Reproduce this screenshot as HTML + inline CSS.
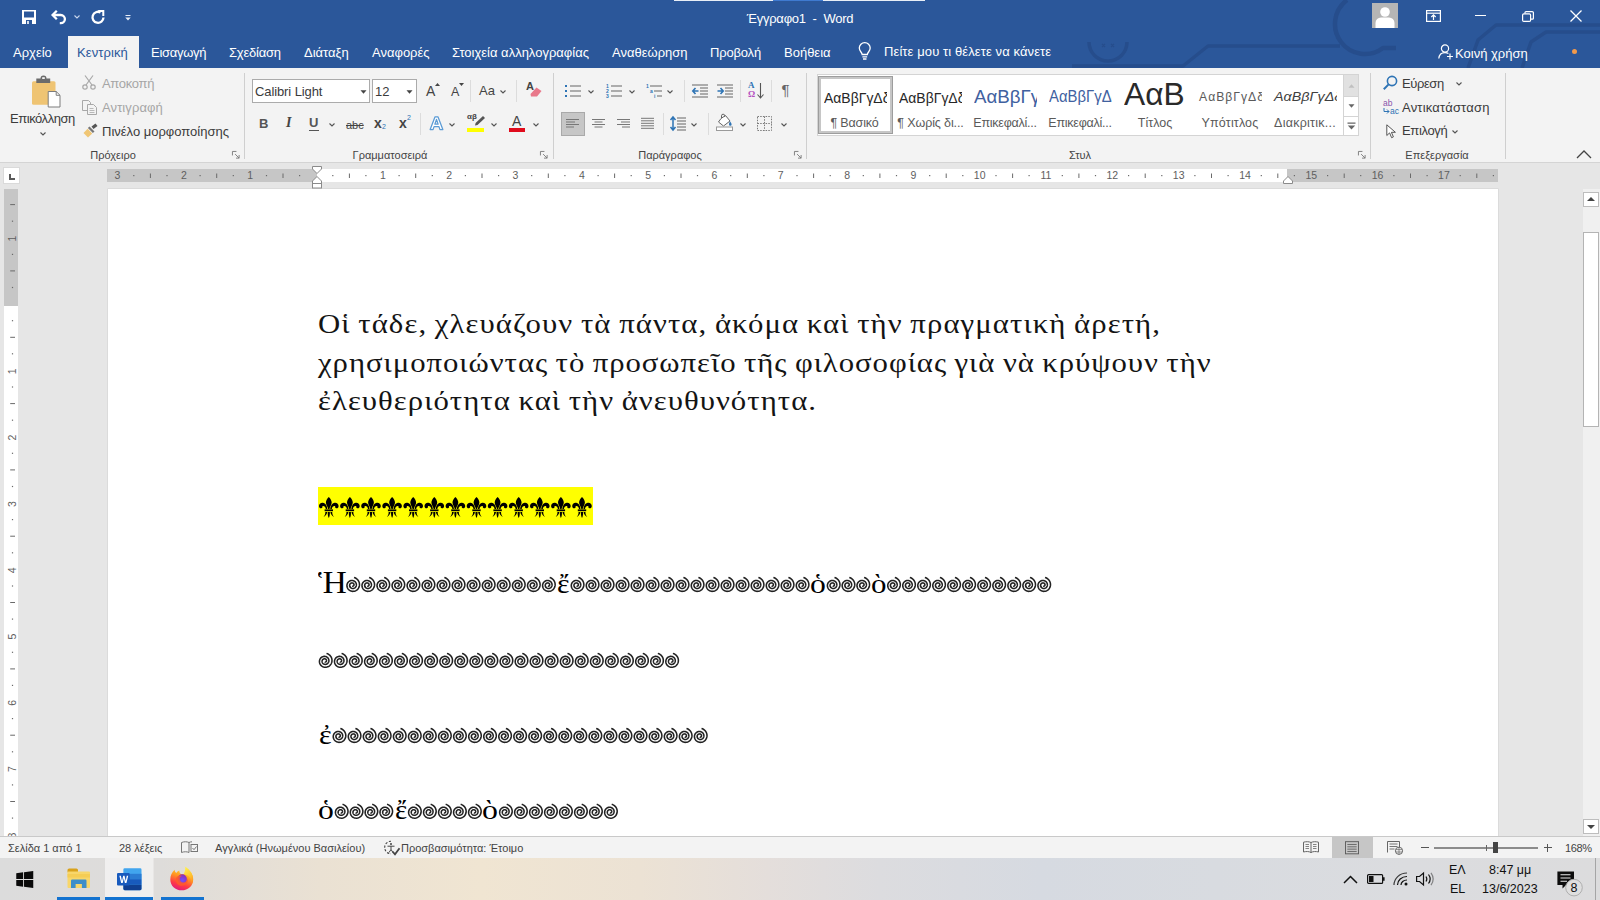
<!DOCTYPE html>
<html lang="el"><head><meta charset="utf-8"><title>Έγγραφο1 - Word</title>
<style>
*{box-sizing:border-box;margin:0;padding:0}
html,body{width:1600px;height:900px;overflow:hidden;background:#e6e6e6;font-family:"Liberation Sans",sans-serif;}
.a{position:absolute;white-space:pre;}
svg{position:absolute;overflow:visible}
#title{position:absolute;left:0;top:0;width:1600px;height:68px;background:#2b579a;overflow:hidden}
.tab{position:absolute;top:45px;font-size:13px;color:#fff;white-space:pre;line-height:16px}
#ribbon{position:absolute;left:0;top:68px;width:1600px;height:95px;background:#f3f3f3;border-bottom:1px solid #d4d4d4}
.gl{position:absolute;top:81px;font-size:11px;color:#444;white-space:pre;line-height:13px;transform:translateX(-50%)}
.sep{position:absolute;top:5px;width:1px;height:86px;background:#cfcfcf}
.rt{position:absolute;font-size:13px;color:#3b3b3b;white-space:pre;line-height:16px}
.dim{color:#a6a6a6}
.sp{position:absolute;top:1px;width:64px;height:38px;overflow:hidden}
.sp span{position:absolute;white-space:pre;line-height:24px;transform-origin:0 50%}
.sl{position:absolute;top:40.5px;font-size:12.5px;color:#5a5a5a;white-space:pre;line-height:15px;transform:translateX(-50%)}
#doc{position:absolute;left:0;top:164px;width:1600px;height:672px;background:#e6e6e6;overflow:hidden}
#page{position:absolute;left:108px;top:25px;width:1390px;height:660px;background:#fff;box-shadow:0 0 0 0.5px #d0d0d0}
#status{position:absolute;left:0;top:836px;width:1600px;height:22px;background:#f3f3f3;border-top:1px solid #c9c9c9;font-size:11px;color:#444}
#task{position:absolute;left:0;top:858px;width:1600px;height:42px;background:linear-gradient(90deg,#dcdcdc 0,#dedcda 10%,#eae1d3 20%,#f0e5d2 30%,#ece2d4 40%,#e4dedb 48%,#dcdcdf 55%,#d6dae1 65%,#d8dbe0 76%,#dbdcdf 88%,#dcdcdd 100%)}
.st{top:5px;line-height:13px;font-size:11px;color:#444}
.tk{font-size:12.5px;color:#111;line-height:15px}
.body{font-family:"Liberation Serif",serif;color:#000;white-space:pre;position:absolute;transform-origin:0 0}
</style></head><body>
<div id="title">
<!-- background circuit decoration -->
<svg width="1600" height="68" style="left:0;top:0" fill="none" stroke="#264d8c" stroke-width="3.5" stroke-linejoin="round">
<path d="M1089 42 A19 19 0 0 0 1127 42"/>
<path d="M1102 44l3 3m0-3l-3 3M1111 44l3 3m0-3l-3 3" stroke-width="1.200"/>
<path d="M1072 66 H1183 L1208 46 H1340"/>
<path d="M1347 0 A30 30 0 0 0 1383 48 H1396" stroke-width="4.5"/>
<path d="M1468 68 L1478 40 L1496 25 H1600"/>
<path d="M1522 68 L1531 42 L1546 32 H1600"/>

</svg>
<!-- top strip -->
<div class="a" style="left:674px;top:0;width:99px;height:1px;background:#e8eef7"></div>
<div class="a" style="left:773px;top:0;width:50px;height:1px;background:#3f7ad0"></div>
<div class="a" style="left:823px;top:0;width:102px;height:1px;background:#e8eef7"></div>
<!-- QAT -->
<svg width="14" height="14" style="left:22px;top:10px" viewBox="0 0 14 14"><path fill="#fff" d="M0 0h14v14H0z"/><path fill="#2b579a" d="M2 1.5h10v6H2z"/><path fill="#2b579a" d="M4 10h6v4H4z"/><path fill="#fff" d="M5.2 11h1.6v3H5.2z"/></svg>
<svg width="16" height="14" style="left:51px;top:10px" viewBox="0 0 16 14" fill="none" stroke="#fff" stroke-width="2.3"><path d="M5.800 0.800 L1.600 5 L5.800 9.200"/><path d="M2.200 5 H9.800 a4.100 4.100 0 0 1 0 8.200 H8.800"/></svg>
<svg width="6" height="4" style="left:74px;top:15px" viewBox="0 0 6 4" fill="none" stroke="#c9d6ec" stroke-width="1.1"><path d="M0.5 0.5 L3 3 L5.5 0.5"/></svg>
<svg width="14" height="14" style="left:91px;top:9.5px" viewBox="0 0 14 14" fill="none" stroke="#fff" stroke-width="2.300"><path d="M9.500 2.400 A5.500 5.500 0 1 0 12.500 7.500"/><path d="M7.200 1.100 H12.300 V6" stroke-width="2"/></svg>
<svg width="6" height="6" style="left:125px;top:15px" viewBox="0 0 6 6"><path fill="#e6ecf6" d="M0.5 0h5v1.1h-5z M0.3 2.6h5.4L3 5.4z"/></svg>
<div class="a" style="left:0;width:1600px;top:11px;text-align:center;font-size:13px;color:#fff;line-height:16px;padding-left:0px;letter-spacing:-0.24px">Έγγραφο1  -  Word</div>
<!-- avatar -->
<div class="a" style="left:1372px;top:3px;width:26px;height:25px;background:#b5b5b5"></div>
<svg width="26" height="25" style="left:1372px;top:3px" viewBox="0 0 26 25"><circle cx="13" cy="9" r="4.8" fill="#fff"/><path fill="#fff" d="M3.5 25 V20 a5.5 5.5 0 0 1 5.5-5.5 h8 a5.5 5.5 0 0 1 5.5 5.5 V25z"/></svg>
<!-- ribbon display -->
<svg width="15" height="12" style="left:1426px;top:10px" viewBox="0 0 15 12" fill="none" stroke="#fff" stroke-width="1.2"><rect x="0.6" y="0.6" width="13.8" height="10.8"/><path d="M0.6 3.2H14.4"/><path d="M7.5 10V5 M5.3 7L7.5 4.8L9.7 7"/></svg>
<div class="a" style="left:1475px;top:15px;width:11px;height:1.3px;background:#fff"></div>
<svg width="12" height="11" style="left:1522px;top:10.5px" viewBox="0 0 12 11" fill="none" stroke="#fff" stroke-width="1.2"><rect x="0.6" y="2.8" width="8" height="7.6" rx="1.2"/><path d="M3 2.6 V1.6 a1 1 0 0 1 1-1 H10.2 a1.2 1.2 0 0 1 1.2 1.2 V7.2 a1 1 0 0 1 -1 1 H9"/></svg>
<svg width="12" height="12" style="left:1570px;top:10px" viewBox="0 0 12 12" fill="none" stroke="#fff" stroke-width="1.3"><path d="M0.5 0.5 L11.5 11.5 M11.5 0.5 L0.5 11.5"/></svg>
<!-- tabs -->
<div class="a" style="left:68px;top:36px;width:71px;height:32px;background:#f3f3f3"></div>
<span class="tab" style="left:13px">Αρχείο</span>
<span class="tab" style="left:77px;color:#2b579a;letter-spacing:0.1px">Κεντρική</span>
<span class="tab" style="left:151px;letter-spacing:-0.28px">Εισαγωγή</span>
<span class="tab" style="left:229px;letter-spacing:-0.22px">Σχεδίαση</span>
<span class="tab" style="left:304px">Διάταξη</span>
<span class="tab" style="left:372px">Αναφορές</span>
<span class="tab" style="left:452px">Στοιχεία αλληλογραφίας</span>
<span class="tab" style="left:612px">Αναθεώρηση</span>
<span class="tab" style="left:710px;letter-spacing:-0.17px">Προβολή</span>
<span class="tab" style="left:784px">Βοήθεια</span>
<svg width="13.5" height="18.5" style="left:858px;top:42px" viewBox="0 0 12 17" fill="none" stroke="#fff" stroke-width="1.2"><path d="M3.6 11.5 C3.6 9.5 1 8.6 1 5.6 A5 5 0 0 1 11 5.6 C11 8.6 8.4 9.5 8.4 11.5 Z"/><path d="M3.8 13.6 H8.2 M4.4 15.6 H7.6"/></svg>
<span class="tab" style="left:884px;top:44px;letter-spacing:0.1px">Πείτε μου τι θέλετε να κάνετε</span>
<svg width="16" height="16" style="left:1438px;top:44px" viewBox="0 0 16 16" fill="none" stroke="#fff" stroke-width="1.2"><circle cx="7" cy="4.5" r="3.6"/><path d="M0.8 14.5 C1.2 10.5 4 8.6 7 8.6 C8.6 8.6 9.6 9 10.4 9.6"/><path d="M12 9.5 V15.5 M9 12.5 H15"/></svg>
<span class="tab" style="left:1455px;top:46px">Κοινή χρήση</span>
<div class="a" style="left:1572px;top:49px;width:5px;height:5px;border-radius:3px;background:#f2994a"></div>
</div>
<div id="ribbon">
<!-- separators -->
<div class="sep" style="left:244px"></div><div class="sep" style="left:553px"></div><div class="sep" style="left:806px"></div><div class="sep" style="left:1370px"></div><div class="sep" style="left:1505px"></div>
<!-- group labels (coords relative to ribbon: y = abs-68) -->
<span class="gl" style="left:113px">Πρόχειρο</span>
<span class="gl" style="left:390px">Γραμματοσειρά</span>
<span class="gl" style="left:670px">Παράγραφος</span>
<span class="gl" style="left:1080px">Στυλ</span>
<span class="gl" style="left:1437px">Επεξεργασία</span>
<!-- launchers -->
<svg class="ln" width="8" height="8" style="left:232px;top:83px" viewBox="0 0 9 9" fill="none" stroke="#777" stroke-width="1"><path d="M0.5 5V0.5H5"/><path d="M3.5 3.5L8 8M8 4.5V8H4.5"/></svg>
<svg class="ln" width="8" height="8" style="left:540px;top:83px" viewBox="0 0 9 9" fill="none" stroke="#777" stroke-width="1"><path d="M0.5 5V0.5H5"/><path d="M3.5 3.5L8 8M8 4.5V8H4.5"/></svg>
<svg class="ln" width="8" height="8" style="left:794px;top:83px" viewBox="0 0 9 9" fill="none" stroke="#777" stroke-width="1"><path d="M0.5 5V0.5H5"/><path d="M3.5 3.5L8 8M8 4.5V8H4.5"/></svg>
<svg class="ln" width="8" height="8" style="left:1358px;top:83px" viewBox="0 0 9 9" fill="none" stroke="#777" stroke-width="1"><path d="M0.5 5V0.5H5"/><path d="M3.5 3.5L8 8M8 4.5V8H4.5"/></svg>
<svg width="16" height="9" style="left:1576px;top:82px" viewBox="0 0 16 9" fill="none" stroke="#444" stroke-width="1.3"><path d="M1 8L8 1L15 8"/></svg>

<!-- ===== Clipboard ===== -->
<svg width="31" height="34" style="left:31px;top:7px" viewBox="0 0 31 34">
<rect x="1" y="6.3" width="23.5" height="23.4" rx="1.5" fill="#efc473"/>
<path d="M5.3 3.6h4.2a3 3 0 0 1 6 0h3.7v4.4H5.3z" fill="#6b6b6b"/>
<rect x="11.2" y="2.2" width="2.6" height="1.8" fill="#f3f3f3"/>
<path d="M17.200 16.500h8l3.800 3.800V32h-11.800z" fill="#fff" stroke="#7d7d7d" stroke-width="1"/>
<path d="M25.200 16.500v3.800h3.800" fill="none" stroke="#7d7d7d" stroke-width="1"/>
</svg>
<span class="rt" style="left:10px;top:43px;letter-spacing:-0.45px">Επικόλληση</span>
<svg width="6" height="4" style="left:40px;top:64px" viewBox="0 0 6 4" fill="none" stroke="#555" stroke-width="1.1"><path d="M0.5 0.5L3 3L5.5 0.5"/></svg>
<!-- cut -->
<svg width="14" height="15" style="left:82px;top:7px" viewBox="0 0 14 15" fill="none" stroke="#a8a8a8" stroke-width="1.2"><path d="M3 0.5L10 10M11 0.5L4 10"/><circle cx="3" cy="12" r="2.2"/><circle cx="11" cy="12" r="2.2"/></svg>
<span class="rt dim" style="left:102px;top:8px;letter-spacing:-0.3px">Αποκοπή</span>
<!-- copy -->
<svg width="15" height="15" style="left:82px;top:32px" viewBox="0 0 15 15" fill="#f3f3f3" stroke="#a8a8a8" stroke-width="1"><path d="M0.5 0.5h6l2 2v8h-8z"/><path d="M5.5 4.5h6l3 3v7h-9z"/><path d="M7.5 8.5h4M7.5 10.5h5M7.5 12.5h5" stroke-width="0.8"/></svg>
<span class="rt dim" style="left:102px;top:32px;letter-spacing:0.1px">Αντιγραφή</span>
<!-- format painter -->
<svg width="15" height="15" style="left:83px;top:55px" viewBox="0 0 15 15"><path d="M8.5 3.5L12.5 0.5L14.5 3L10.5 6z" fill="#555"/><path d="M6.5 3.5l5 5-1.6 1.4-5-5z" fill="#777"/><path d="M4.6 5.8l4.6 4.6L5 14.5 0.5 10z" fill="#f0c674"/></svg>
<span class="rt" style="left:102px;top:56px">Πινέλο μορφοποίησης</span>

<!-- ===== Font ===== -->
<div class="a" style="left:252px;top:11px;width:118px;height:24px;background:#fff;border:1px solid #ababab"></div>
<span class="rt" style="left:255px;top:15.5px;letter-spacing:-0.1px">Calibri Light</span>
<svg width="7" height="4" style="left:360px;top:22px" viewBox="0 0 7 4"><path d="M0.5 0.3h6L3.5 3.7z" fill="#444"/></svg>
<div class="a" style="left:372px;top:11px;width:45px;height:24px;background:#fff;border:1px solid #ababab"></div>
<span class="rt" style="left:375px;top:15.5px">12</span>
<svg width="7" height="4" style="left:406px;top:22px" viewBox="0 0 7 4"><path d="M0.5 0.3h6L3.5 3.7z" fill="#444"/></svg>
<span class="rt" style="left:426px;top:15px;font-size:14px;color:#444">A</span>
<svg width="5" height="3" style="left:435px;top:15px" viewBox="0 0 5 3"><path d="M0 3L2.5 0L5 3z" fill="#444"/></svg>
<span class="rt" style="left:451px;top:16px;font-size:12.5px;color:#444">A</span>
<svg width="5" height="3" style="left:459px;top:15px" viewBox="0 0 5 3"><path d="M0 0L2.5 3L5 0z" fill="#444"/></svg>
<div class="a" style="left:470px;top:12px;width:1px;height:22px;background:#dcdcdc"></div>
<span class="rt" style="left:479px;top:15px;font-size:13px;color:#444">Aa</span>
<svg width="6" height="4" style="left:500px;top:22px" viewBox="0 0 6 4" fill="none" stroke="#555" stroke-width="1.1"><path d="M0.5 0.5L3 3L5.5 0.5"/></svg>
<div class="a" style="left:516px;top:12px;width:1px;height:22px;background:#dcdcdc"></div>
<span class="rt" style="left:526px;top:10px;font-size:11px;color:#444;font-weight:bold">A</span>
<svg width="12" height="10" style="left:530px;top:19px" viewBox="0 0 12 10"><path d="M6.5 0.5L11.5 4 7 9.5 1 9.5 0.5 7z" fill="#e8788a"/></svg>
<!-- row2 -->
<span class="rt" style="left:259px;top:48px;font-weight:bold;font-size:13px;color:#555">B</span>
<span class="rt" style="left:286px;top:47px;font-style:italic;font-weight:bold;font-size:14px;color:#444;font-family:'Liberation Serif',serif">I</span>
<span class="rt" style="left:309px;top:47px;font-size:13px;color:#555;font-weight:bold">U</span>
<div class="a" style="left:309px;top:61.5px;width:10px;height:1.3px;background:#555"></div>
<svg width="6" height="4" style="left:329px;top:55px" viewBox="0 0 6 4" fill="none" stroke="#555" stroke-width="1.1"><path d="M0.5 0.5L3 3L5.5 0.5"/></svg>
<span class="rt" style="left:346px;top:49px;font-size:11px;color:#444;text-decoration:line-through">abc</span>
<span class="rt" style="left:374px;top:47px;font-size:14px;color:#444;font-weight:bold">x</span><span class="rt" style="left:382px;top:55px;font-size:7px;color:#2e74b5;line-height:8px">2</span>
<span class="rt" style="left:399px;top:47px;font-size:14px;color:#444;font-weight:bold">x</span><span class="rt" style="left:407px;top:46px;font-size:7px;color:#2e74b5;line-height:8px">2</span>
<div class="a" style="left:420px;top:45px;width:1px;height:22px;background:#dcdcdc"></div>
<svg width="15" height="14.5" style="left:428.5px;top:48px" viewBox="0 0 16 16" fill="#fff" stroke="#5b9bd5" stroke-width="1.4" stroke-linejoin="round"><path d="M1 15L6.3 1h3.4L15 15h-3.2l-1.1-3.3H5.3L4.2 15z M6.2 9h3.6L8 3.8z"/></svg>
<svg width="6" height="4" style="left:449px;top:55px" viewBox="0 0 6 4" fill="none" stroke="#555" stroke-width="1.1"><path d="M0.5 0.5L3 3L5.5 0.5"/></svg>
<span class="rt" style="left:467px;top:44px;font-size:8px;color:#444;font-weight:bold;line-height:9px">αβ</span>
<svg width="12" height="10" style="left:473px;top:48px" viewBox="0 0 12 10"><path d="M10 0L12 2 4.5 9 2 9.5 2.6 7z" fill="#555"/></svg>
<div class="a" style="left:467px;top:60px;width:17px;height:4px;background:#ffff00"></div>
<svg width="6" height="4" style="left:491px;top:55px" viewBox="0 0 6 4" fill="none" stroke="#555" stroke-width="1.1"><path d="M0.5 0.5L3 3L5.5 0.5"/></svg>
<span class="rt" style="left:512px;top:45px;font-size:14px;color:#444">A</span>
<div class="a" style="left:509px;top:60px;width:16px;height:4px;background:#e00b1c"></div>
<svg width="6" height="4" style="left:533px;top:55px" viewBox="0 0 6 4" fill="none" stroke="#555" stroke-width="1.1"><path d="M0.5 0.5L3 3L5.5 0.5"/></svg>
<!-- ===== Paragraph row1 (center y abs 91 -> rel 23) ===== -->
<svg width="16" height="14" style="left:565px;top:16px" viewBox="0 0 16 14"><g fill="#2e74b5"><rect x="0" y="1" width="2" height="2"/><rect x="0" y="6" width="2" height="2"/><rect x="0" y="11" width="2" height="2"/></g><g fill="#666"><rect x="5" y="1.5" width="11" height="1"/><rect x="5" y="6.5" width="11" height="1"/><rect x="5" y="11.5" width="11" height="1"/></g></svg>
<svg width="6" height="4" style="left:588px;top:22px" viewBox="0 0 6 4" fill="none" stroke="#555" stroke-width="1.1"><path d="M0.5 0.5L3 3L5.5 0.5"/></svg>
<svg width="16" height="15" style="left:606px;top:15px" viewBox="0 0 16 15"><g fill="#2e74b5" font-family="Liberation Sans" font-size="5" font-weight="bold"><text x="0" y="4.5">1</text><text x="0" y="9.5">2</text><text x="0" y="14.5">3</text></g><g fill="#666"><rect x="5" y="2.5" width="11" height="1"/><rect x="5" y="7.5" width="11" height="1"/><rect x="5" y="12.5" width="11" height="1"/></g></svg>
<svg width="6" height="4" style="left:629px;top:22px" viewBox="0 0 6 4" fill="none" stroke="#555" stroke-width="1.1"><path d="M0.5 0.5L3 3L5.5 0.5"/></svg>
<svg width="17" height="15" style="left:646px;top:15px" viewBox="0 0 17 15"><g fill="#2e74b5" font-family="Liberation Sans" font-size="5" font-weight="bold"><text x="0" y="4.5">1</text><text x="4" y="9.5">a</text><text x="8" y="14.5">i</text></g><g fill="#666"><rect x="4" y="2.5" width="12" height="1"/><rect x="8" y="7.5" width="8" height="1"/><rect x="11" y="12.5" width="5" height="1"/></g></svg>
<svg width="6" height="4" style="left:667px;top:22px" viewBox="0 0 6 4" fill="none" stroke="#555" stroke-width="1.1"><path d="M0.5 0.5L3 3L5.5 0.5"/></svg>
<div class="a" style="left:684px;top:12px;width:1px;height:22px;background:#dcdcdc"></div>
<svg width="16" height="14" style="left:692px;top:16px" viewBox="0 0 16 14"><g fill="#666"><rect x="0" y="0.5" width="16" height="1"/><rect x="8" y="3.5" width="8" height="1"/><rect x="8" y="6.5" width="8" height="1"/><rect x="8" y="9.5" width="8" height="1"/><rect x="0" y="12.5" width="16" height="1"/></g><path d="M6.5 7H1 M3.5 4L0.8 7l2.7 3" fill="none" stroke="#2e74b5" stroke-width="1.6"/></svg>
<svg width="16" height="14" style="left:717px;top:16px" viewBox="0 0 16 14"><g fill="#666"><rect x="0" y="0.5" width="16" height="1"/><rect x="8" y="3.5" width="8" height="1"/><rect x="8" y="6.5" width="8" height="1"/><rect x="8" y="9.5" width="8" height="1"/><rect x="0" y="12.5" width="16" height="1"/></g><path d="M0.5 7H6 M3.5 4L6.2 7l-2.7 3" fill="none" stroke="#2e74b5" stroke-width="1.6"/></svg>
<div class="a" style="left:740px;top:12px;width:1px;height:22px;background:#dcdcdc"></div>
<span class="rt" style="left:748px;top:13px;font-size:9px;line-height:9px;color:#2e74b5;font-weight:bold;font-family:'Liberation Serif',serif">A</span>
<span class="rt" style="left:748px;top:22px;font-size:9px;line-height:9px;color:#b44fc0;font-weight:bold;font-family:'Liberation Serif',serif">Ω</span>
<svg width="7" height="16" style="left:757px;top:15px" viewBox="0 0 7 16" fill="none" stroke="#555" stroke-width="1.1"><path d="M3.5 0V15M0.5 11.5l3 3.5 3-3.5"/></svg>
<div class="a" style="left:771px;top:12px;width:1px;height:22px;background:#dcdcdc"></div>
<span class="rt" style="left:781.5px;top:14px;font-size:15px;color:#666">¶</span>
<!-- row2 (center y abs 124 -> rel 56) -->
<div class="a" style="left:561px;top:44px;width:24px;height:24px;background:#c6c6c6;border:1px solid #a9a9a9"></div>
<svg width="13" height="12" style="left:566px;top:51px" viewBox="0 0 13 12" fill="#777"><rect x="0" y="0" width="13" height="1"/><rect x="0" y="2.5" width="9" height="1"/><rect x="0" y="5" width="13" height="1"/><rect x="0" y="7.5" width="8" height="1"/></svg>
<svg width="13" height="12" style="left:591.5px;top:51px" viewBox="0 0 13 12" fill="#777"><rect x="0" y="0" width="13" height="1"/><rect x="2.5" y="2.5" width="8" height="1"/><rect x="0" y="5" width="13" height="1"/><rect x="2.5" y="7.5" width="8" height="1"/></svg>
<svg width="13" height="12" style="left:616.5px;top:51px" viewBox="0 0 13 12" fill="#777"><rect x="0" y="0" width="13" height="1"/><rect x="4" y="2.5" width="9" height="1"/><rect x="0" y="5" width="13" height="1"/><rect x="5" y="7.5" width="8" height="1"/></svg>
<svg width="13" height="12" style="left:641px;top:51px" viewBox="0 0 13 12" fill="#777"><rect x="0" y="-1.2" width="13" height="1"/><rect x="0" y="1.3" width="13" height="1"/><rect x="0" y="3.8" width="13" height="1"/><rect x="0" y="6.3" width="13" height="1"/><rect x="0" y="8.8" width="13" height="1"/></svg>
<div class="a" style="left:663px;top:45px;width:1px;height:22px;background:#dcdcdc"></div>
<svg width="16" height="15" style="left:670px;top:48px" viewBox="0 0 16 15"><path d="M3 1V14 M0.5 4L3 1l2.5 3 M0.5 11L3 14l2.5-3" fill="none" stroke="#2e74b5" stroke-width="1.5"/><g fill="#666"><rect x="7" y="1.5" width="9" height="1"/><rect x="7" y="4.5" width="9" height="1"/><rect x="7" y="7.5" width="9" height="1"/><rect x="7" y="10.5" width="9" height="1"/><rect x="7" y="13.5" width="9" height="1"/></g></svg>
<svg width="6" height="4" style="left:691px;top:55px" viewBox="0 0 6 4" fill="none" stroke="#555" stroke-width="1.1"><path d="M0.5 0.5L3 3L5.5 0.5"/></svg>
<div class="a" style="left:708px;top:45px;width:1px;height:22px;background:#dcdcdc"></div>
<svg width="17" height="17" style="left:716px;top:46px" viewBox="0 0 17 17"><path d="M5 4.5L9.5 1.5 14 7 7.5 12 2.5 8z" fill="#fff" stroke="#666" stroke-width="1"/><path d="M5.5 4V1.8a1.6 1.6 0 0 1 3.2 0V3" fill="none" stroke="#666" stroke-width="1"/><path d="M14 7.2c1 1.4 1.6 2.4 1.6 3.2a1.3 1.3 0 0 1-2.6 0c0-.8.4-1.8 1-3.2z" fill="#2e74b5"/><rect x="0.5" y="13" width="16" height="3.5" fill="#fff" stroke="#9a9a9a" stroke-width="1"/></svg>
<svg width="6" height="4" style="left:740px;top:55px" viewBox="0 0 6 4" fill="none" stroke="#555" stroke-width="1.1"><path d="M0.5 0.5L3 3L5.5 0.5"/></svg>
<svg width="15" height="15" style="left:757px;top:48px" viewBox="0 0 15 15" fill="none" stroke="#7a7a7a" stroke-width="1" stroke-dasharray="1.5 1.2"><rect x="0.5" y="0.5" width="14" height="14"/><path d="M7.5 0.5V14.5M0.5 7.5H14.5"/></svg>
<svg width="6" height="4" style="left:781px;top:55px" viewBox="0 0 6 4" fill="none" stroke="#555" stroke-width="1.1"><path d="M0.5 0.5L3 3L5.5 0.5"/></svg>

<!-- ===== Styles ===== -->
<div class="a" style="left:817px;top:6px;width:542px;height:62px;background:#fff;border:1px solid #d4d4d4;overflow:hidden">
 <div class="a" style="left:0px;top:1px;width:75px;height:58px;border:3px solid #c6c6c6;outline:1px solid #9d9d9d;outline-offset:-1px"></div>
 <div class="sp" style="left:5px"><span style="font-size:15px;color:#262626;top:9.5px;left:1px;transform:scaleX(0.93)">ΑαΒβΓγΔδ</span></div>
 <div class="sp" style="left:80px"><span style="font-size:15px;color:#262626;top:9.5px;left:1px;transform:scaleX(0.93)">ΑαΒβΓγΔδ</span></div>
 <div class="sp" style="left:155px"><span style="font-size:18px;color:#41619f;top:8.5px;left:1.3px;transform:scaleX(1.04)">ΑαΒβΓγ</span></div>
 <div class="sp" style="left:230px"><span style="font-size:16px;color:#41619f;top:9px;left:1px;transform:scaleX(0.93)">ΑαΒβΓγΔδ</span></div>
 <div class="sp" style="left:305px"><span style="font-size:30.5px;color:#2a2a2a;top:-2.5px;left:0.5px;line-height:40px;transform:scaleX(1.04)">ΑαΒ</span></div>
 <div class="sp" style="left:380px"><span style="font-size:12.2px;color:#5a5a5a;top:8.5px;left:1px;letter-spacing:1px">ΑαΒβΓγΔδ</span></div>
 <div class="sp" style="left:455px"><span style="font-size:13.5px;color:#404040;top:8.5px;left:0.5px;font-style:italic;transform:scaleX(1.06)">ΑαΒβΓγΔδ</span></div>
 <span class="sl" style="left:36.5px;letter-spacing:-0.15px">¶ Βασικό</span>
 <span class="sl" style="left:112.5px;letter-spacing:-0.12px">¶ Χωρίς δι...</span>
 <span class="sl" style="left:187px;letter-spacing:-0.25px">Επικεφαλί...</span>
 <span class="sl" style="left:262px;letter-spacing:-0.25px">Επικεφαλί...</span>
 <span class="sl" style="left:337px">Τίτλος</span>
 <span class="sl" style="left:412px;letter-spacing:0.15px">Υπότιτλος</span>
 <span class="sl" style="left:487px;letter-spacing:0.25px">Διακριτικ...</span>
 <div class="a" style="left:525px;top:0;width:16px;height:60px;border-left:1px solid #d4d4d4;background:#fff"></div>
 <div class="a" style="left:526px;top:0;width:15px;height:21px;background:#e1e1e1"></div>
 <div class="a" style="left:525px;top:21px;width:16px;height:1px;background:#d4d4d4"></div>
 <div class="a" style="left:525px;top:41px;width:16px;height:1px;background:#d4d4d4"></div>
 <svg width="7" height="4" style="left:530px;top:9px" viewBox="0 0 7 4"><path d="M0.5 3.7h6L3.5 0.3z" fill="#c0c0c0"/></svg>
 <svg width="7" height="4" style="left:530px;top:29px" viewBox="0 0 7 4"><path d="M0.5 0.3h6L3.5 3.7z" fill="#666"/></svg>
 <svg width="9" height="8" style="left:529px;top:47px" viewBox="0 0 9 8"><path d="M0.5 0.5h8v1.2h-8z M0.8 3.5h7.4L4.5 7.5z" fill="#666"/></svg>
</div>
<!-- ===== Editing ===== -->
<svg width="15" height="15" style="left:1383px;top:7px" viewBox="0 0 15 15" fill="none" stroke="#2e74b5" stroke-width="1.6"><circle cx="9" cy="6" r="4.6"/><path d="M5.6 9.4L0.8 14.2" stroke-width="2"/></svg>
<span class="rt" style="left:1402px;top:8px;letter-spacing:-0.4px">Εύρεση</span>
<svg width="6" height="4" style="left:1456px;top:14px" viewBox="0 0 6 4" fill="none" stroke="#555" stroke-width="1.1"><path d="M0.5 0.5L3 3L5.5 0.5"/></svg>
<span class="rt" style="left:1383px;top:31px;font-size:8.5px;line-height:9px;color:#8a56ab">ab</span>
<span class="rt" style="left:1390px;top:38.5px;font-size:8.5px;line-height:9px;color:#2e74b5">ac</span>
<svg width="7" height="6" style="left:1383px;top:40px" viewBox="0 0 7 6" fill="none" stroke="#2e74b5" stroke-width="1"><path d="M1 0v3.5h5M4 1.5l2 2-2 2"/></svg>
<span class="rt" style="left:1402px;top:32px;letter-spacing:0.2px">Αντικατάσταση</span>
<svg width="11" height="15" style="left:1386px;top:56px" viewBox="0 0 11 15" fill="#fff" stroke="#555" stroke-width="1" stroke-linejoin="round"><path d="M0.8 0.8V11.5l2.8-2.6 2 4.8 1.8-.8-2-4.6h4z"/></svg>
<span class="rt" style="left:1402px;top:55px;letter-spacing:-0.35px">Επιλογή</span>
<svg width="6" height="4" style="left:1452px;top:62px" viewBox="0 0 6 4" fill="none" stroke="#555" stroke-width="1.1"><path d="M0.5 0.5L3 3L5.5 0.5"/></svg>

</div>
<div id="doc">
<div id="page"></div>
<div class="a" style="left:107px;top:5px;width:1391px;height:13px;background:#fff"></div>
<div class="a" style="left:107px;top:5px;width:210px;height:13px;background:#c6c6c6"></div>
<div class="a" style="left:1287px;top:5px;width:211px;height:13px;background:#c6c6c6"></div>
<svg width="1600" height="30" style="left:0;top:0" viewBox="0 0 1600 30"><g fill="#5e5e5e" font-family="Liberation Sans" font-size="10.5" text-anchor="middle"><text x="117.5" y="15.3">3</text><text x="183.9" y="15.3">2</text><text x="250.2" y="15.3">1</text><text x="382.8" y="15.3">1</text><text x="449.1" y="15.3">2</text><text x="515.5" y="15.3">3</text><text x="581.8" y="15.3">4</text><text x="648.1" y="15.3">5</text><text x="714.4" y="15.3">6</text><text x="780.7" y="15.3">7</text><text x="847.1" y="15.3">8</text><text x="913.4" y="15.3">9</text><text x="979.7" y="15.3">10</text><text x="1046.0" y="15.3">11</text><text x="1112.3" y="15.3">12</text><text x="1178.7" y="15.3">13</text><text x="1245.0" y="15.3">14</text><text x="1311.3" y="15.3">15</text><text x="1377.6" y="15.3">16</text><text x="1443.9" y="15.3">17</text></g><g fill="#6a6a6a"><rect x="133.2" y="11" width="1.2" height="1.2"/><rect x="149.9" y="9.5" width="1" height="4.5"/><rect x="166.4" y="11" width="1.2" height="1.2"/><rect x="199.5" y="11" width="1.2" height="1.2"/><rect x="216.2" y="9.5" width="1" height="4.5"/><rect x="232.7" y="11" width="1.2" height="1.2"/><rect x="265.9" y="11" width="1.2" height="1.2"/><rect x="282.5" y="9.5" width="1" height="4.5"/><rect x="299.0" y="11" width="1.2" height="1.2"/><rect x="332.2" y="11" width="1.2" height="1.2"/><rect x="348.9" y="9.5" width="1" height="4.5"/><rect x="365.3" y="11" width="1.2" height="1.2"/><rect x="398.5" y="11" width="1.2" height="1.2"/><rect x="415.2" y="9.5" width="1" height="4.5"/><rect x="431.7" y="11" width="1.2" height="1.2"/><rect x="464.8" y="11" width="1.2" height="1.2"/><rect x="481.5" y="9.5" width="1" height="4.5"/><rect x="498.0" y="11" width="1.2" height="1.2"/><rect x="531.1" y="11" width="1.2" height="1.2"/><rect x="547.8" y="9.5" width="1" height="4.5"/><rect x="564.3" y="11" width="1.2" height="1.2"/><rect x="597.5" y="11" width="1.2" height="1.2"/><rect x="614.1" y="9.5" width="1" height="4.5"/><rect x="630.6" y="11" width="1.2" height="1.2"/><rect x="663.8" y="11" width="1.2" height="1.2"/><rect x="680.5" y="9.5" width="1" height="4.5"/><rect x="696.9" y="11" width="1.2" height="1.2"/><rect x="730.1" y="11" width="1.2" height="1.2"/><rect x="746.8" y="9.5" width="1" height="4.5"/><rect x="763.3" y="11" width="1.2" height="1.2"/><rect x="796.4" y="11" width="1.2" height="1.2"/><rect x="813.1" y="9.5" width="1" height="4.5"/><rect x="829.6" y="11" width="1.2" height="1.2"/><rect x="862.7" y="11" width="1.2" height="1.2"/><rect x="879.4" y="9.5" width="1" height="4.5"/><rect x="895.9" y="11" width="1.2" height="1.2"/><rect x="929.1" y="11" width="1.2" height="1.2"/><rect x="945.7" y="9.5" width="1" height="4.5"/><rect x="962.2" y="11" width="1.2" height="1.2"/><rect x="995.4" y="11" width="1.2" height="1.2"/><rect x="1012.1" y="9.5" width="1" height="4.5"/><rect x="1028.5" y="11" width="1.2" height="1.2"/><rect x="1061.7" y="11" width="1.2" height="1.2"/><rect x="1078.4" y="9.5" width="1" height="4.5"/><rect x="1094.9" y="11" width="1.2" height="1.2"/><rect x="1128.0" y="11" width="1.2" height="1.2"/><rect x="1144.7" y="9.5" width="1" height="4.5"/><rect x="1161.2" y="11" width="1.2" height="1.2"/><rect x="1194.3" y="11" width="1.2" height="1.2"/><rect x="1211.0" y="9.5" width="1" height="4.5"/><rect x="1227.5" y="11" width="1.2" height="1.2"/><rect x="1260.7" y="11" width="1.2" height="1.2"/><rect x="1277.3" y="9.5" width="1" height="4.5"/><rect x="1293.8" y="11" width="1.2" height="1.2"/><rect x="1327.0" y="11" width="1.2" height="1.2"/><rect x="1343.7" y="9.5" width="1" height="4.5"/><rect x="1360.1" y="11" width="1.2" height="1.2"/><rect x="1393.3" y="11" width="1.2" height="1.2"/><rect x="1410.0" y="9.5" width="1" height="4.5"/><rect x="1426.5" y="11" width="1.2" height="1.2"/><rect x="1459.6" y="11" width="1.2" height="1.2"/><rect x="1476.3" y="9.5" width="1" height="4.5"/><rect x="1492.8" y="11" width="1.2" height="1.2"/></g><g fill="#fff" stroke="#8a8a8a" stroke-width="1"><path d="M312.5 2.5h9v2.5l-4.5 4.5-4.5-4.5z"/><path d="M312.5 19.5v-2.5l4.5-4.5 4.5 4.5v2.5z"/><rect x="312.5" y="19.5" width="9" height="4.5"/><path d="M1283.5 19.5v-2.5l4.5-4.5 4.5 4.5v2.5z"/></g></svg>
<div class="a" style="left:3px;top:3px;width:17px;height:17px;background:#fff;border:1px solid #dadada"></div>
<div class="a" style="left:8.5px;top:9.5px;width:2px;height:6.5px;background:#5a5a5a"></div><div class="a" style="left:8.5px;top:14px;width:6px;height:2px;background:#5a5a5a"></div>
<div class="a" style="left:4px;top:25px;width:14px;height:660px;background:#fff"></div>
<div class="a" style="left:4px;top:25px;width:14px;height:117px;background:#c6c6c6"></div>
<svg width="24" height="672" style="left:0;top:0" viewBox="0 0 24 672"><g fill="#5e5e5e" font-family="Liberation Sans" font-size="10.5" text-anchor="middle"><text transform="translate(15.8 74.7) rotate(-90)" x="0" y="0">1</text><text transform="translate(15.8 207.3) rotate(-90)" x="0" y="0">1</text><text transform="translate(15.8 273.6) rotate(-90)" x="0" y="0">2</text><text transform="translate(15.8 340.0) rotate(-90)" x="0" y="0">3</text><text transform="translate(15.8 406.3) rotate(-90)" x="0" y="0">4</text><text transform="translate(15.8 472.6) rotate(-90)" x="0" y="0">5</text><text transform="translate(15.8 538.9) rotate(-90)" x="0" y="0">6</text><text transform="translate(15.8 605.2) rotate(-90)" x="0" y="0">7</text><text transform="translate(15.8 671.6) rotate(-90)" x="0" y="0">8</text></g><g fill="#6a6a6a"><rect x="10.2" y="40.1" width="4.8" height="1"/><rect x="11.9" y="56.6" width="1.2" height="1.2"/><rect x="11.9" y="89.8" width="1.2" height="1.2"/><rect x="10.2" y="106.4" width="4.8" height="1"/><rect x="11.9" y="122.9" width="1.2" height="1.2"/><rect x="11.9" y="156.1" width="1.2" height="1.2"/><rect x="10.2" y="172.8" width="4.8" height="1"/><rect x="11.9" y="189.2" width="1.2" height="1.2"/><rect x="11.9" y="222.4" width="1.2" height="1.2"/><rect x="10.2" y="239.1" width="4.8" height="1"/><rect x="11.9" y="255.6" width="1.2" height="1.2"/><rect x="11.9" y="288.7" width="1.2" height="1.2"/><rect x="10.2" y="305.4" width="4.8" height="1"/><rect x="11.9" y="321.9" width="1.2" height="1.2"/><rect x="11.9" y="355.0" width="1.2" height="1.2"/><rect x="10.2" y="371.7" width="4.8" height="1"/><rect x="11.9" y="388.2" width="1.2" height="1.2"/><rect x="11.9" y="421.4" width="1.2" height="1.2"/><rect x="10.2" y="438.0" width="4.8" height="1"/><rect x="11.9" y="454.5" width="1.2" height="1.2"/><rect x="11.9" y="487.7" width="1.2" height="1.2"/><rect x="10.2" y="504.4" width="4.8" height="1"/><rect x="11.9" y="520.8" width="1.2" height="1.2"/><rect x="11.9" y="554.0" width="1.2" height="1.2"/><rect x="10.2" y="570.7" width="4.8" height="1"/><rect x="11.9" y="587.2" width="1.2" height="1.2"/><rect x="11.9" y="620.3" width="1.2" height="1.2"/><rect x="10.2" y="637.0" width="4.8" height="1"/><rect x="11.9" y="653.5" width="1.2" height="1.2"/></g></svg>
<span class="body" style="left:318px;top:145.36px;font-size:27px;line-height:31.05px;letter-spacing:0.928px;word-spacing:-1.0px;color:#141414;transform:scaleX(1.1400)">Οἱ τάδε, χλευάζουν τὰ πάντα, ἀκόμα καὶ τὴν πραγματικὴ ἀρετή,</span>
<span class="body" style="left:318px;top:184.36px;font-size:27px;line-height:31.05px;letter-spacing:0.826px;word-spacing:-1.0px;color:#141414;transform:scaleX(1.1400)">χρησιμοποιώντας τὸ προσωπεῖο τῆς φιλοσοφίας γιὰ νὰ κρύψουν τὴν</span>
<span class="body" style="left:318px;top:222.36px;font-size:27px;line-height:31.05px;letter-spacing:0.889px;word-spacing:-1.0px;color:#141414;transform:scaleX(1.1400)">ἐλευθεριότητα καὶ τὴν ἀνευθυνότητα.</span>
<div class="a" style="left:318px;top:322.5px;width:274.5px;height:38px;background:#ffff00"></div>
<svg width="1600" height="672" style="left:0;top:0" viewBox="0 0 1600 672"><defs><symbol id="fl" viewBox="0 0 21 21" overflow="visible" preserveAspectRatio="none"><path d="M10.5 0C12.4 1.8 13.6 3.6 13.6 5.6C13.6 8 11.6 9.6 11.2 12H9.8C9.4 9.6 7.4 8 7.4 5.6C7.4 3.6 8.6 1.8 10.5 0Z"/><path d="M8.9 12C8.7 9.2 7 6.3 4.2 5.9C1.8 5.6 0 7.2 0 9.1C0 10.6 1.2 11.6 2.4 11.4C3.5 11.2 4 10.3 3.6 9.3C5.4 8.7 7 10 7.3 12Z"/><path d="M12.1 12C12.3 9.2 14 6.3 16.8 5.9C19.2 5.6 21 7.2 21 9.1C21 10.6 19.8 11.6 18.6 11.4C17.5 11.2 17 10.3 17.4 9.3C15.6 8.7 14 10 13.7 12Z"/><rect x="6" y="12.5" width="9" height="1.8"/><path d="M9.4 15H11.6C11.8 17.2 11.4 19.3 10.5 21C9.6 19.3 9.2 17.2 9.4 15Z"/><path d="M6.8 15H8.8C8.6 17 7.2 18.9 4.9 20C6.4 18.4 6.9 16.6 6.8 15Z"/><path d="M14.2 15H12.2C12.4 17 13.8 18.9 16.1 20C14.6 18.4 14.1 16.6 14.2 15Z"/></symbol><symbol id="sp" overflow="visible"><path d="M1.62 -7.63 L2.58 -7.29 L3.48 -6.83 L4.30 -6.26 L5.04 -5.59 L5.67 -4.84 L6.20 -4.02 L6.61 -3.15 L6.90 -2.24 L7.06 -1.31 L7.10 -0.37 L7.02 0.55 L6.82 1.45 L6.51 2.31 L6.09 3.10 L5.58 3.83 L4.98 4.48 L4.31 5.04 L3.57 5.50 L2.80 5.86 L1.99 6.11 L1.16 6.25 L0.33 6.28 L-0.49 6.20 L-1.28 6.02 L-2.03 5.73 L-2.73 5.36 L-3.37 4.90 L-3.93 4.37 L-4.42 3.77 L-4.81 3.12 L-5.12 2.44 L-5.33 1.73 L-5.44 1.01 L-5.46 0.29 L-5.38 -0.42 L-5.21 -1.11 L-4.95 -1.75 L-4.62 -2.36 L-4.22 -2.90 L-3.75 -3.38 L-3.24 -3.79 L-2.68 -4.12 L-2.09 -4.37 L-1.48 -4.54 L-0.86 -4.63 L-0.24 -4.63 L0.36 -4.55 L0.94 -4.40 L1.49 -4.19 L2.00 -3.92 L2.46 -3.58 L2.88 -3.20 L3.23 -2.76 L3.52 -2.29 L3.75 -1.79 L3.90 -1.27 L3.98 -0.74 L3.99 -0.21 L3.94 0.31 L3.81 0.81 L3.63 1.29 L3.39 1.73 L3.09 2.12 L2.75 2.48 L2.37 2.78 L1.96 3.02 L1.53 3.20 L1.08 3.33 L0.63 3.39 L0.18 3.40 L-0.26 3.34 L-0.69 3.23 L-1.08 3.06 L-1.45 2.85 L-1.78 2.60 L-2.07 2.30 L-2.32 1.98 L-2.52 1.63 L-2.66 1.27 L-2.76 0.90 L-2.80 0.52 L-2.80 0.15 L-2.74 -0.22 L-2.64 -0.56 L-2.50 -0.88 L-2.32 -1.18 L-2.10 -1.44 L-1.86 -1.67 L-1.59 -1.86 L-1.31 -2.01 L-1.01 -2.12 L-0.71 -2.19 L-0.41 -2.21 L-0.12 -2.20 L0.17 -2.14 L0.44 -2.05 L0.68 -1.93 L0.91 -1.78 L1.10 -1.61 L1.27 -1.41 L1.41 -1.20 L1.51 -0.98 L1.58 -0.75 L1.62 -0.53 L1.62 -0.30 L1.60 -0.08 L1.55 0.12 L1.47 0.31 L1.37 0.48 L1.25 0.64 L1.11 0.76 L0.97 0.87 L0.81 0.95 L0.65 1.01 L0.50 1.04 L0.34 1.05 L0.19 1.03 L0.05 1.00 L-0.07 0.95 L-0.19 0.88" fill="none" stroke="#222" stroke-width="1.55" stroke-linecap="butt"/></symbol></defs><use href="#fl" x="319.0" y="332.9" width="19.6" height="21"/><use href="#fl" x="340.1" y="332.9" width="19.6" height="21"/><use href="#fl" x="361.2" y="332.9" width="19.6" height="21"/><use href="#fl" x="382.3" y="332.9" width="19.6" height="21"/><use href="#fl" x="403.4" y="332.9" width="19.6" height="21"/><use href="#fl" x="424.5" y="332.9" width="19.6" height="21"/><use href="#fl" x="445.6" y="332.9" width="19.6" height="21"/><use href="#fl" x="466.7" y="332.9" width="19.6" height="21"/><use href="#fl" x="487.8" y="332.9" width="19.6" height="21"/><use href="#fl" x="508.9" y="332.9" width="19.6" height="21"/><use href="#fl" x="530.0" y="332.9" width="19.6" height="21"/><use href="#fl" x="551.1" y="332.9" width="19.6" height="21"/><use href="#fl" x="572.2" y="332.9" width="19.6" height="21"/><use href="#sp" x="352.40" y="421.10"/><use href="#sp" x="367.45" y="421.10"/><use href="#sp" x="382.50" y="421.10"/><use href="#sp" x="397.55" y="421.10"/><use href="#sp" x="412.60" y="421.10"/><use href="#sp" x="427.65" y="421.10"/><use href="#sp" x="442.70" y="421.10"/><use href="#sp" x="457.75" y="421.10"/><use href="#sp" x="472.80" y="421.10"/><use href="#sp" x="487.85" y="421.10"/><use href="#sp" x="502.90" y="421.10"/><use href="#sp" x="517.95" y="421.10"/><use href="#sp" x="533.00" y="421.10"/><use href="#sp" x="548.05" y="421.10"/><use href="#sp" x="576.75" y="421.10"/><use href="#sp" x="591.75" y="421.10"/><use href="#sp" x="606.75" y="421.10"/><use href="#sp" x="621.75" y="421.10"/><use href="#sp" x="636.75" y="421.10"/><use href="#sp" x="651.75" y="421.10"/><use href="#sp" x="666.75" y="421.10"/><use href="#sp" x="681.75" y="421.10"/><use href="#sp" x="696.75" y="421.10"/><use href="#sp" x="711.75" y="421.10"/><use href="#sp" x="726.75" y="421.10"/><use href="#sp" x="741.75" y="421.10"/><use href="#sp" x="756.75" y="421.10"/><use href="#sp" x="771.75" y="421.10"/><use href="#sp" x="786.75" y="421.10"/><use href="#sp" x="801.75" y="421.10"/><use href="#sp" x="832.85" y="421.10"/><use href="#sp" x="847.65" y="421.10"/><use href="#sp" x="862.45" y="421.10"/><use href="#sp" x="893.20" y="421.10"/><use href="#sp" x="908.22" y="421.10"/><use href="#sp" x="923.24" y="421.10"/><use href="#sp" x="938.26" y="421.10"/><use href="#sp" x="953.28" y="421.10"/><use href="#sp" x="968.30" y="421.10"/><use href="#sp" x="983.32" y="421.10"/><use href="#sp" x="998.34" y="421.10"/><use href="#sp" x="1013.36" y="421.10"/><use href="#sp" x="1028.38" y="421.10"/><use href="#sp" x="1043.40" y="421.10"/><use href="#sp" x="324.90" y="497.00"/><use href="#sp" x="339.96" y="497.00"/><use href="#sp" x="355.02" y="497.00"/><use href="#sp" x="370.08" y="497.00"/><use href="#sp" x="385.14" y="497.00"/><use href="#sp" x="400.20" y="497.00"/><use href="#sp" x="415.26" y="497.00"/><use href="#sp" x="430.32" y="497.00"/><use href="#sp" x="445.38" y="497.00"/><use href="#sp" x="460.44" y="497.00"/><use href="#sp" x="475.50" y="497.00"/><use href="#sp" x="490.56" y="497.00"/><use href="#sp" x="505.62" y="497.00"/><use href="#sp" x="520.68" y="497.00"/><use href="#sp" x="535.74" y="497.00"/><use href="#sp" x="550.80" y="497.00"/><use href="#sp" x="565.86" y="497.00"/><use href="#sp" x="580.92" y="497.00"/><use href="#sp" x="595.98" y="497.00"/><use href="#sp" x="611.04" y="497.00"/><use href="#sp" x="626.10" y="497.00"/><use href="#sp" x="641.16" y="497.00"/><use href="#sp" x="656.22" y="497.00"/><use href="#sp" x="671.28" y="497.00"/><use href="#sp" x="338.70" y="572.10"/><use href="#sp" x="353.75" y="572.10"/><use href="#sp" x="368.80" y="572.10"/><use href="#sp" x="383.85" y="572.10"/><use href="#sp" x="398.90" y="572.10"/><use href="#sp" x="413.95" y="572.10"/><use href="#sp" x="429.00" y="572.10"/><use href="#sp" x="444.05" y="572.10"/><use href="#sp" x="459.10" y="572.10"/><use href="#sp" x="474.15" y="572.10"/><use href="#sp" x="489.20" y="572.10"/><use href="#sp" x="504.25" y="572.10"/><use href="#sp" x="519.30" y="572.10"/><use href="#sp" x="534.35" y="572.10"/><use href="#sp" x="549.40" y="572.10"/><use href="#sp" x="564.45" y="572.10"/><use href="#sp" x="579.50" y="572.10"/><use href="#sp" x="594.55" y="572.10"/><use href="#sp" x="609.60" y="572.10"/><use href="#sp" x="624.65" y="572.10"/><use href="#sp" x="639.70" y="572.10"/><use href="#sp" x="654.75" y="572.10"/><use href="#sp" x="669.80" y="572.10"/><use href="#sp" x="684.85" y="572.10"/><use href="#sp" x="699.90" y="572.10"/><use href="#sp" x="340.90" y="647.90"/><use href="#sp" x="355.75" y="647.90"/><use href="#sp" x="370.60" y="647.90"/><use href="#sp" x="385.45" y="647.90"/><use href="#sp" x="414.05" y="647.90"/><use href="#sp" x="429.05" y="647.90"/><use href="#sp" x="444.05" y="647.90"/><use href="#sp" x="459.05" y="647.90"/><use href="#sp" x="474.05" y="647.90"/><use href="#sp" x="505.10" y="647.90"/><use href="#sp" x="520.10" y="647.90"/><use href="#sp" x="535.10" y="647.90"/><use href="#sp" x="550.10" y="647.90"/><use href="#sp" x="565.10" y="647.90"/><use href="#sp" x="580.10" y="647.90"/><use href="#sp" x="595.10" y="647.90"/><use href="#sp" x="610.10" y="647.90"/></svg>
<span class="body" style="left:318px;top:402.17px;font-size:30.5px;line-height:35.07px;transform:scaleX(1.100)">Ἡ</span>
<span class="body" style="left:556.95px;top:404.05px;font-size:28px;line-height:32.20px;transform:scaleX(1.064)">ἔ</span>
<span class="body" style="left:810.04px;top:404.05px;font-size:28px;line-height:32.20px;transform:scaleX(1.133)">ὁ</span>
<span class="body" style="left:870.72px;top:404.05px;font-size:28px;line-height:32.20px;transform:scaleX(1.104)">ὸ</span>
<span class="body" style="left:319.08px;top:554.55px;font-size:28px;line-height:32.20px;transform:scaleX(1.079)">ἐ</span>
<span class="body" style="left:318.09px;top:630.45px;font-size:28px;line-height:32.20px;transform:scaleX(1.133)">ὁ</span>
<span class="body" style="left:394.78px;top:630.45px;font-size:28px;line-height:32.20px;transform:scaleX(1.033)">ἔ</span>
<span class="body" style="left:482.19px;top:630.45px;font-size:28px;line-height:32.20px;transform:scaleX(1.138)">ὸ</span>
<div class="a" style="left:1583px;top:25px;width:17px;height:647px;background:#f0f0f0"></div>
<div class="a" style="left:1583px;top:28px;width:16px;height:15px;background:#fff;border:1px solid #bdbdbd"></div>
<svg width="8" height="4" style="left:1587px;top:33px" viewBox="0 0 8 4"><path d="M0 4h8L4 0z" fill="#444"/></svg>
<div class="a" style="left:1583px;top:68px;width:16px;height:195px;background:#fff;border:1px solid #b4b4b4"></div>
<div class="a" style="left:1583px;top:655px;width:16px;height:15px;background:#fff;border:1px solid #bdbdbd"></div>
<svg width="8" height="4" style="left:1587px;top:661px" viewBox="0 0 8 4"><path d="M0 0h8L4 4z" fill="#444"/></svg>
</div>
<div id="status">
<span class="a st" style="left:8px">Σελίδα 1 από 1</span>
<span class="a st" style="left:119px">28 λέξεις</span>
<svg width="17" height="13" style="left:181px;top:4px" viewBox="0 0 17 13" fill="none" stroke="#777" stroke-width="1"><path d="M8 1.5V11.5M8 1.5C6 0.5 3 0.5 0.5 1.5V11.5C3 10.5 6 10.5 8 11.5M8 1.5C9 1 10 0.8 11 0.8"/><rect x="10" y="3.5" width="6.5" height="7"/><path d="M11.5 7l1.5 1.7 2.5-3.2"/></svg>
<span class="a st" style="left:215px">Αγγλικά (Ηνωμένου Βασιλείου)</span>
<svg width="17" height="16" style="left:383px;top:3px" viewBox="0 0 17 16" fill="none" stroke="#444" stroke-width="1.1"><path d="M8 1.2A6.3 6.3 0 1 0 8 13.8" stroke-dasharray="2.2 1.6"/><circle cx="8" cy="4" r="1" fill="#444" stroke="none"/><path d="M4.5 6.2H11.5M8 6.2V9.5M8 9.5L6 12.5M8 9.5L10 12.5" stroke-width="1"/><path d="M9.5 11.5l2.5 2.8 4.5-6" stroke-width="1.8"/></svg>
<span class="a st" style="left:401px">Προσβασιμότητα: Έτοιμο</span>
<!-- view buttons -->
<svg width="16" height="13" style="left:1303px;top:4px" viewBox="0 0 16 13" fill="none" stroke="#666" stroke-width="1"><path d="M8 1.5V12M8 1.5C6 0.5 3 0.5 0.5 1.2V11C3 10.3 6 10.3 8 11.5C10 10.3 13 10.3 15.5 11V1.2C13 0.5 10 0.5 8 1.5"/><path d="M2.5 3.5h3.5M2.5 5.5h3.5M2.5 7.5h3.5M10 3.5h3.5M10 5.5h3.5M10 7.5h3.5" stroke-width="0.8"/></svg>
<div class="a" style="left:1332px;top:0;width:41px;height:21px;background:#c6c6c6"></div>
<svg width="14" height="13.5" style="left:1345px;top:4px" viewBox="0 0 15 14" fill="none" stroke="#5a5a5a" stroke-width="1"><rect x="0.5" y="0.5" width="14" height="13"/><path d="M2.5 3.5h10M2.5 6h10M2.5 8.5h10M2.5 11h10" stroke-width="0.9"/></svg>
<svg width="17" height="14" style="left:1387px;top:4px" viewBox="0 0 17 14" fill="none" stroke="#666" stroke-width="1"><path d="M0.5 11.5V0.5H12.5V6"/><path d="M2.5 3h8M2.5 5.5h8M2.5 8h5" stroke-width="0.9"/><circle cx="12" cy="9.8" r="3.6" fill="#f3f3f3"/><path d="M9 8.6h6M9 11h6M12 6.2v7.2" stroke-width="0.7"/></svg>
<div class="a" style="left:1421px;top:10px;width:8px;height:1px;background:#555"></div>
<div class="a" style="left:1434px;top:9.5px;width:104px;height:2px;background:#8c8c8c"></div>
<div class="a" style="left:1486px;top:8px;width:1px;height:6px;background:#666"></div>
<div class="a" style="left:1492.5px;top:5px;width:5px;height:11px;background:#444"></div>
<div class="a" style="left:1543.5px;top:10px;width:8px;height:1px;background:#555"></div><div class="a" style="left:1547px;top:6.5px;width:1px;height:8px;background:#555"></div>
<span class="a st" style="left:1565px;top:5px;letter-spacing:-0.4px">168%</span>
</div>
<div id="task">
<!-- start -->
<svg width="17.5" height="17" style="left:16.3px;top:12.5px" viewBox="0 0 19 19" fill="#0a0a0a"><path d="M0 2.6L7.7 1.5V9H0zM8.7 1.4L19 0V9H8.7zM0 10H7.7V17.5L0 16.4zM8.7 10H19V19L8.7 17.6z"/></svg>
<!-- explorer -->
<svg width="24" height="21" style="left:66.500px;top:10px" viewBox="0 0 24 21"><rect x="0.500" y="0.500" width="10.500" height="4.500" rx="1.600" fill="#d9a21b"/><path d="M0.500 4.500a1 1 0 0 1 1-1H22a1 1 0 0 1 1 1V19a1 1 0 0 1-1 1H1.500a1 1 0 0 1-1-1z" fill="#f8d66a"/><path d="M0.500 6h22.500v3.500H0.500z" fill="#f5cd55"/><path d="M4 20v-7.300a1.200 1.200 0 0 1 1.200-1.200h13.100a1.200 1.200 0 0 1 1.200 1.200V20h-4.600v-4H8.600v4z" fill="#3d8ec9"/></svg>
<div class="a" style="left:57px;top:39px;width:43px;height:3px;background:#1373d0"></div>
<!-- word (active) -->
<div class="a" style="left:105px;top:0;width:48px;height:42px;background:rgba(255,255,255,0.55)"></div>
<svg width="24.500" height="22.500" style="left:117.300px;top:9.500px" viewBox="0 0 27 24"><rect x="7" y="0" width="20" height="24" rx="1.5" fill="#41a5ee"/><rect x="7" y="6" width="20" height="6" fill="#2b7cd3"/><rect x="7" y="12" width="20" height="6" fill="#185abd"/><path d="M7 18h20v4.5a1.5 1.5 0 0 1-1.500 1.500H8.500A1.500 1.500 0 0 1 7 22.500z" fill="#103f91"/><rect x="0" y="5" width="14" height="14" rx="1.2" fill="#185abd"/><path d="M2.600 8.200h1.700l1.200 5.600 1.300-5.600h1.500l1.300 5.600 1.200-5.600h1.600l-2 7.800H8.700L7.500 10.800 6.300 16H4.600z" fill="#fff"/></svg>
<div class="a" style="left:105px;top:39px;width:48px;height:3px;background:#1373d0"></div>
<div class="a" style="left:153px;top:0;width:1px;height:42px;background:rgba(255,255,255,0.3)"></div>
<!-- firefox -->
<svg width="25" height="25" style="left:168.500px;top:8px" viewBox="0 0 25 25"><defs><linearGradient id="fxa" x1="0.700" y1="0" x2="0.300" y2="1"><stop offset="0" stop-color="#ffd33a"/><stop offset="0.350" stop-color="#ff9a1f"/><stop offset="0.700" stop-color="#ff3b45"/><stop offset="1" stop-color="#e0187c"/></linearGradient><linearGradient id="fxb" x1="0.300" y1="0" x2="0.700" y2="1"><stop offset="0" stop-color="#fff14d"/><stop offset="0.600" stop-color="#ffc02e"/><stop offset="1" stop-color="#ff8a22"/></linearGradient><radialGradient id="fxc" cx="0.500" cy="0.650" r="0.600"><stop offset="0" stop-color="#7250ff"/><stop offset="1" stop-color="#8d2fb8"/></radialGradient></defs><path d="M12.600 24.300C6.200 24.300 1.300 19.600 1.300 13.400C1.300 9.300 3 6.200 5.600 3.800C5.800 5.300 6.300 6.300 7.200 7C8 5.800 9 5 10.300 4.500C10.300 6 10.800 7.200 11.800 8H16.500L22 6.500C23.500 8.600 24.200 11 24.200 13.400C24.200 19.600 19.200 24.300 12.600 24.300Z" fill="url(#fxa)"/><path d="M16.200 0.800C19.500 2.600 23.200 6.500 24 11.500C24.300 14 23.800 16.500 22.600 18.500C23 15.500 22 12.500 20 10.500C18.500 9 16.500 8.300 14.500 8.500C15.800 6 16.500 3.500 16.200 0.800Z" fill="url(#fxb)"/><circle cx="13.200" cy="13" r="4.700" fill="url(#fxc)"/><path d="M8.300 10.500C9.800 9.300 11.500 9.200 12.800 9.900C11.300 10.400 10.600 11.600 10.700 13C10.800 15 12.500 16.600 14.600 16.500C17.200 16.400 18.800 14.200 18.400 11.800C20 15.500 17.500 19.800 13 19.800C8.500 19.800 6 15.800 7 12.200C7.300 11.500 7.700 11 8.300 10.500Z" fill="#ff5a2a" opacity="0.850"/></svg>
<div class="a" style="left:161px;top:39px;width:43px;height:3px;background:#1373d0"></div>
<!-- tray -->
<svg width="15" height="9" style="left:1343px;top:17px" viewBox="0 0 15 9" fill="none" stroke="#111" stroke-width="1.5"><path d="M1 8L7.500 1.500L14 8"/></svg>
<svg width="18" height="10" style="left:1367px;top:16px" viewBox="0 0 18 10" fill="none" stroke="#111" stroke-width="1.2"><rect x="0.600" y="0.600" width="15" height="8.800" rx="1"/><path d="M16.800 3.300v3.400" stroke-width="1.600"/><rect x="2" y="2" width="4.500" height="6" fill="#111" stroke="none"/></svg>
<svg width="16" height="14" style="left:1393px;top:14px" viewBox="0 0 16 14" fill="none" stroke="#111" stroke-width="1.200"><path d="M1 13C1 6.500 6.500 1 14 1" opacity="0.8"/><path d="M4.500 13C4.500 8.500 8.500 4.500 14 4.500"/><path d="M8 13C8 10.300 10.500 8 14 8"/><circle cx="13" cy="12" r="1.500" fill="#111" stroke="none"/></svg>
<svg width="18" height="14" style="left:1416px;top:14px" viewBox="0 0 18 14" fill="none" stroke="#111" stroke-width="1.200"><path d="M0.600 4.500H3.500L7.500 1V13L3.500 9.500H0.600z"/><path d="M10 4.500c1 1.500 1 3.500 0 5"/><path d="M12.500 2.500c2 2.700 2 6.300 0 9"/><path d="M15 0.800c2.600 3.700 2.600 8.700 0 12.400" opacity="0.450"/></svg>
<span class="a tk" style="left:1449px;top:5px">ΕΛ</span>
<span class="a tk" style="left:1450px;top:24px">EL</span>
<span class="a tk" style="left:1489px;top:5px">8:47 μμ</span>
<span class="a tk" style="left:1482px;top:24px">13/6/2023</span>
<svg width="28" height="28" style="left:1557px;top:12.500px" viewBox="0 0 28 28"><path d="M0.400 0.400H17V14H9L5.500 17.500V14H0.400z" fill="#0c0c0c"/><path d="M3.500 3.800h10M3.500 7h10M3.500 10.200h6.500" stroke="#e9e9e9" stroke-width="1.100"/><circle cx="17" cy="16.600" r="8.300" fill="#dfdfdf" stroke="#a8a8a8" stroke-width="0.900"/><text x="17" y="21" font-family="Liberation Sans" font-size="12.500" text-anchor="middle" fill="#111">8</text></svg>
<div class="a" style="left:1595px;top:0;width:1px;height:42px;background:rgba(0,0,0,0.25)"></div>
</div>
</body></html>
